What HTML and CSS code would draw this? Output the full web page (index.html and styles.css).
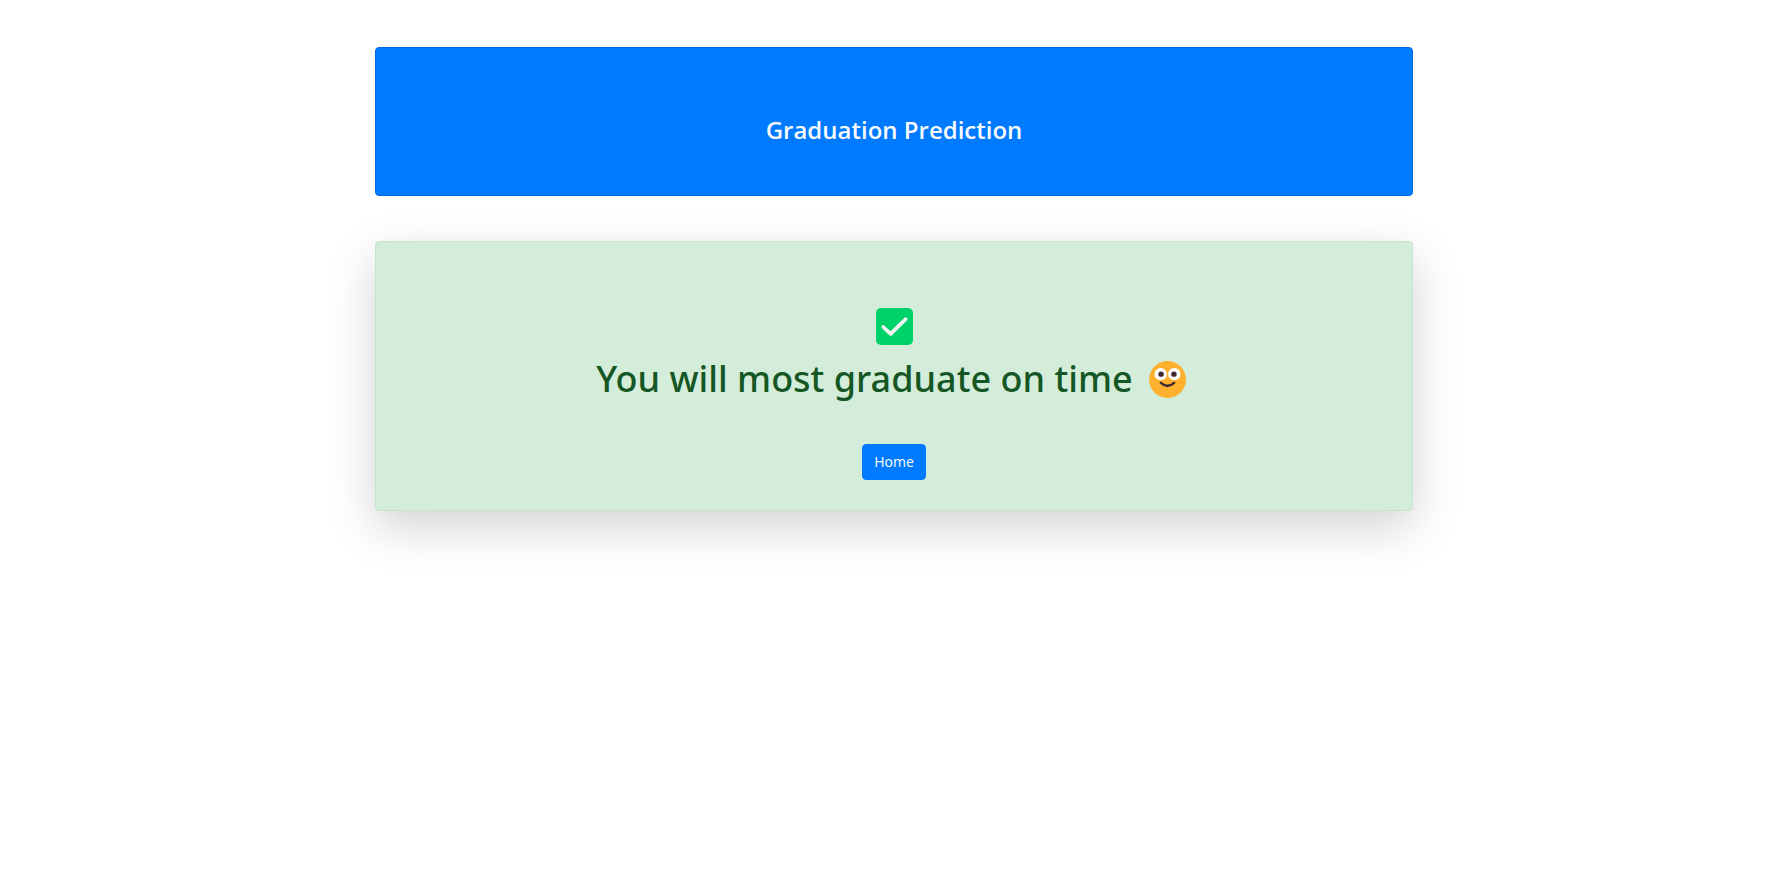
FILE: index.html
```html
<!DOCTYPE html>
<html lang="en">
<head>
<meta charset="utf-8">
<meta name="viewport" content="width=device-width, initial-scale=1">
<title>Graduation Prediction</title>
<link rel="stylesheet" href="styles.css">
</head>
<body>
<main class="container">
  <header class="banner">
    <h1 class="banner-title">Graduation Prediction</h1>
  </header>
  <section class="result">
    <svg class="icon" viewBox="0 0 38 38" aria-hidden="true">
      <rect width="38" height="38" rx="5" fill="#00d26a"/>
      <path d="M7.5 19.5 15 26.5 30.5 11.5" fill="none" stroke="#f4f4f4" stroke-width="3.8" stroke-linecap="round" stroke-linejoin="round"/>
    </svg>
    <h2 class="result-title">
      <span>You will most graduate on time</span>
      <svg class="icon" viewBox="0 0 38 38" role="img" aria-label="Smiling face">
        <circle cx="19" cy="19" r="19" fill="#ffb02e"/>
        <circle cx="12" cy="13.5" r="6.3" fill="#fff"/>
        <circle cx="26" cy="13.5" r="6.3" fill="#fff"/>
        <circle cx="12.4" cy="13.5" r="2.8" fill="#402a32"/>
        <circle cx="25.6" cy="13.5" r="2.8" fill="#402a32"/>
        <path d="M12.2 22.5Q19 28.5 25.8 22.5" fill="none" stroke="#402a32" stroke-width="2.6" stroke-linecap="round"/>
      </svg>
    </h2>
    <a class="button" href="#">Home</a>
  </section>
</main>
</body>
</html>
```
FILE: styles.css
```css
* {
  box-sizing: border-box;
}

body {
  margin: 0;
  min-height: 100vh;
  background: #fff;
  font-family: "Segoe UI", "Open Sans", "Noto Sans", sans-serif;
  font-size: 16px;
  line-height: 24px;
}

.container {
  max-width: 1038px;
  min-height: 100vh;
  margin: 0 auto;
  padding: 47px 0;
}

.banner {
  margin-bottom: 45px;
  padding: 65px 20px 48px;
  border: 1px solid #0069d9;
  border-radius: 4px;
  background: #007bff;
  text-align: center;
}

.banner-title {
  margin: 0;
  color: #f8f9fa;
  font-size: 24px;
  font-weight: 600;
  line-height: 34px;
}

.result {
  display: flex;
  flex-direction: column;
  align-items: center;
  padding: 66px 20px 30px;
  border: 1px solid #c3e6cb;
  border-radius: 4px;
  background: #d4edda;
  box-shadow: 0 16px 48px rgba(0, 0, 0, 0.18);
}

.icon {
  display: block;
  width: 37px;
  height: 37px;
  flex: none;
}

.result-title {
  display: flex;
  align-items: center;
  justify-content: center;
  gap: 16px;
  margin: 10px 0 41px;
  padding-right: 6px;
  color: #155724;
  font-family: "Segoe UI", "Noto Sans", "Open Sans", sans-serif;
  font-size: 36px;
  font-weight: 500;
  line-height: 48px;
}

.button {
  padding: 5px 11px;
  border: 1px solid #007bff;
  border-radius: 4px;
  background: #007bff;
  color: #fff;
  font-size: 14px;
  text-decoration: none;
}
```
